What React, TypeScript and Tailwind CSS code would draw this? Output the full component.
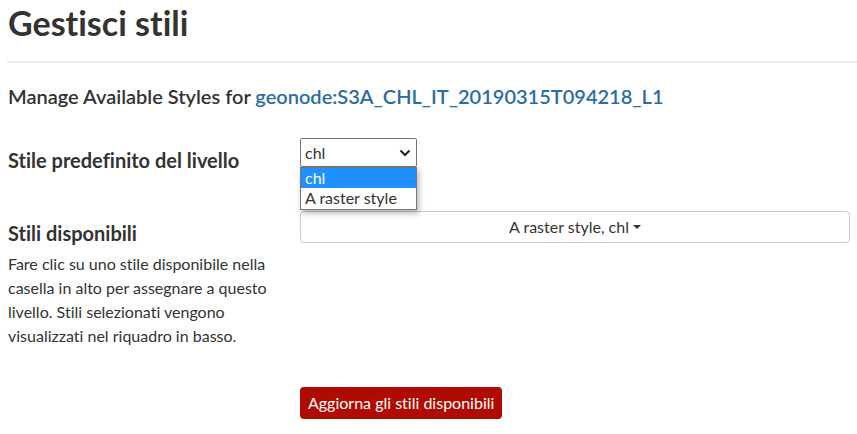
import React from "react";

export default function App() {
  return (
    <div className="w-[857px] h-[434px] bg-white text-[#333] font-['Lato','Noto_Sans',sans-serif] [font-variant-ligatures:none] overflow-hidden">
      <div className="pl-2">
        <h1 className="text-[34px] leading-[40px] font-bold pt-[3px]">Gestisci stili</h1>
      </div>
      <div className="ml-[7px] mt-[18px] border-t-2 border-[#eee]" />
      <div className="pl-2 pr-[7px]">
        <h4 className="mt-[20px] text-[20px] leading-[26px] font-semibold">
          Manage Available Styles for{" "}
          <a className="text-[#2a6ca6]">geonode:S3A_CHL_IT_20190315T094218_L1</a>
        </h4>

        <div className="flex mt-[29px]">
          <div className="w-[292px] pt-[10px] text-[20px] leading-[24px] font-bold">
            Stile predefinito del livello
          </div>
          <div className="relative">
            <div className="w-[117px] h-[29px] border border-[#767676] rounded-[2px] bg-white flex items-center justify-between pl-[4px] pr-[4px] text-[16px]">
              <span>chl</span>
              <svg width="12" height="8" viewBox="0 0 12 8" className="mr-[1px]">
                <path d="M1.5 1.5 L6 6 L10.5 1.5" stroke="#222" strokeWidth="2" fill="none" />
              </svg>
            </div>
            <div className="absolute left-0 top-[29px] w-[117px] border border-[#767676] bg-white text-[16px] leading-[20px] shadow-[2px_3px_6px_rgba(0,0,0,0.3)] z-10">
              <div className="bg-[#1e90ff] text-white pl-[4px]">chl</div>
              <div className="pl-[4px] pb-px">A raster style</div>
            </div>
          </div>
        </div>

        <div className="flex mt-[39px]">
          <div className="w-[292px]">
            <div className="pt-[10px] text-[20px] leading-[24px] font-bold">Stili disponibili</div>
            <p className="mt-[7px] text-[16px] leading-[24px] w-[275px]">
              Fare clic su uno stile disponibile nella casella in alto per assegnare a questo livello. Stili selezionati vengono visualizzati nel riquadro in basso.
            </p>
          </div>
          <div className="flex-1">
            <button className="w-full h-[32px] border border-[#ccc] rounded-[4px] bg-white flex items-center justify-center text-[16px]">
              A raster style, chl
              <span className="ml-[4px] inline-block w-0 h-0 border-l-[4px] border-r-[4px] border-t-[4px] border-l-transparent border-r-transparent border-t-[#333]" />
            </button>
          </div>
        </div>

        <div className="pl-[292px] mt-[39px]">
          <button className="h-[32px] px-[8px] rounded-[4px] bg-[#b00b00] text-white text-[16px]">
            Aggiorna gli stili disponibili
          </button>
        </div>
      </div>
    </div>
  );
}
